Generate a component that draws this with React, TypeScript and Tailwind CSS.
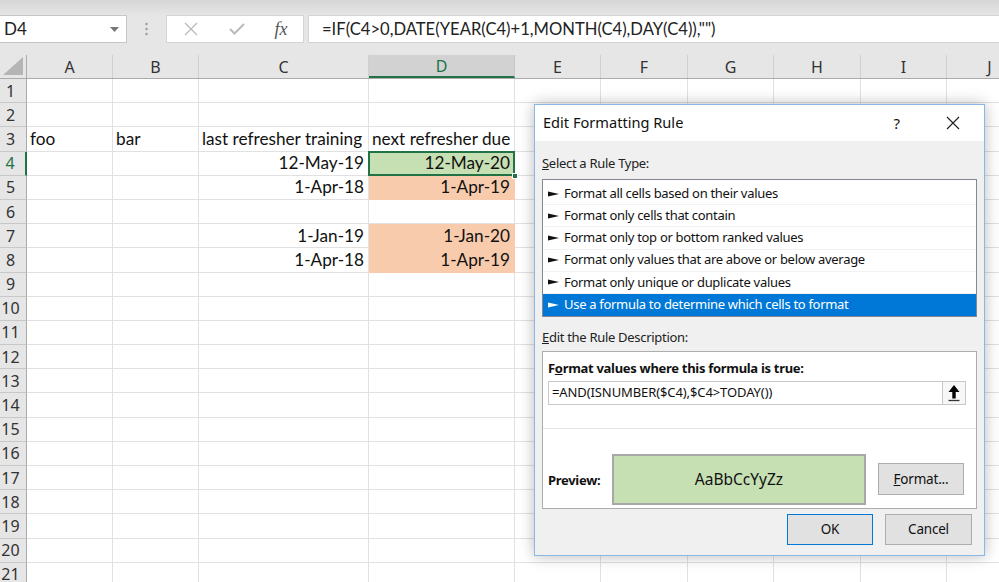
import React from 'react';

const CELL_FONT = "font-['Lato','Liberation_Sans',sans-serif]";
const UI_FONT = "font-['Noto_Sans','Open_Sans',sans-serif]";

const columns = [
  { key: 'A', w: 'w-[86px]' },
  { key: 'B', w: 'w-[86px]' },
  { key: 'C', w: 'w-[170px]' },
  { key: 'D', w: 'w-[146px]' },
  { key: 'E', w: 'w-[86px]' },
  { key: 'F', w: 'w-[87px]' },
  { key: 'G', w: 'w-[86px]' },
  { key: 'H', w: 'w-[87px]' },
  { key: 'I', w: 'w-[86px]' },
  { key: 'J', w: 'w-[86px]' },
];

type CellData = { text: string; align?: 'left' | 'right'; fill?: 'green' | 'salmon'; selected?: boolean };

const data: Record<number, Record<string, CellData>> = {
  3: {
    A: { text: 'foo' },
    B: { text: 'bar' },
    C: { text: 'last refresher training' },
    D: { text: 'next refresher due' },
  },
  4: {
    C: { text: '12-May-19', align: 'right' },
    D: { text: '12-May-20', align: 'right', fill: 'green', selected: true },
  },
  5: {
    C: { text: '1-Apr-18', align: 'right' },
    D: { text: '1-Apr-19', align: 'right', fill: 'salmon' },
  },
  7: {
    C: { text: '1-Jan-19', align: 'right' },
    D: { text: '1-Jan-20', align: 'right', fill: 'salmon' },
  },
  8: {
    C: { text: '1-Apr-18', align: 'right' },
    D: { text: '1-Apr-19', align: 'right', fill: 'salmon' },
  },
};

const rules = [
  'Format all cells based on their values',
  'Format only cells that contain',
  'Format only top or bottom ranked values',
  'Format only values that are above or below average',
  'Format only unique or duplicate values',
  'Use a formula to determine which cells to format',
];

const FormulaBar = () => (
  <div className="h-[55px] bg-[#e6e6e6] flex flex-col">
    <div className="h-[14px] bg-gradient-to-b from-[#d6d6d6] to-[#e4e4e4]" />
    <div className="flex items-center h-[28px] mt-[1px]">
      <div className="w-[127px] h-full bg-white border border-[#c6c6c6] border-l-0 flex items-center justify-between pl-[4px] pr-[7px]">
        <span className={`${CELL_FONT} text-[17px] text-[#222]`}>D4</span>
        <svg width="9" height="5" viewBox="0 0 9 5"><path d="M0 0h9L4.5 5z" fill="#777" /></svg>
      </div>
      <div className="w-[39px] flex justify-center">
        <svg width="3" height="14" viewBox="0 0 3 14">
          <circle cx="1.5" cy="2" r="1.2" fill="#999" />
          <circle cx="1.5" cy="7" r="1.2" fill="#999" />
          <circle cx="1.5" cy="12" r="1.2" fill="#999" />
        </svg>
      </div>
      <div className="w-[138px] h-full bg-white border border-[#d4d4d4] flex items-center">
        <div className="w-[48px] flex justify-center">
          <svg width="14" height="14" viewBox="0 0 14 14"><path d="M1 1l12 12M13 1L1 13" stroke="#bbb" strokeWidth="1.3" /></svg>
        </div>
        <div className="w-[44px] flex justify-center">
          <svg width="16" height="12" viewBox="0 0 16 12"><path d="M1 6l4.5 4.5L15 1" stroke="#bbb" strokeWidth="2" fill="none" /></svg>
        </div>
        <div className="w-[44px] flex justify-center">
          <span className="font-['Liberation_Serif',serif] italic text-[18px] text-[#555] leading-none">fx</span>
        </div>
      </div>
      <div className="flex-1 ml-[4px] h-full bg-white border border-[#d4d4d4] border-r-0 flex items-center pl-[13px]">
        <span className={`${CELL_FONT} text-[16.6px] text-[#222] whitespace-nowrap`}>=IF(C4&gt;0,DATE(YEAR(C4)+1,MONTH(C4),DAY(C4)),"")</span>
      </div>
    </div>
  </div>
);

const HeaderRow = () => (
  <div className="flex h-[24px] bg-[#e6e6e6] border-b border-[#ababab]">
    <div className="w-[27px] shrink-0 border-r border-[#ababab] relative flex items-end justify-end">
      <svg width="20" height="18" viewBox="0 0 20 18" className="mr-[3px] mb-[3px]"><path d="M20 0V18H0z" fill="#b5b5b5" /></svg>
    </div>
    {columns.map((c) =>
      c.key === 'D' ? (
        <div key={c.key} className={`${c.w} shrink-0 bg-[#d2d2d2] border-r border-[#c6c6c6] border-b-2 border-b-[#217346] flex items-center justify-center ${UI_FONT} text-[16px] text-[#217346]`}>
          {c.key}
        </div>
      ) : (
        <div key={c.key} className={`${c.w} shrink-0 border-r border-[#d0d0d0] flex items-center justify-center ${UI_FONT} text-[16px] text-[#333]`}>
          {c.key}
        </div>
      )
    )}
  </div>
);

const Cell = ({ w, cell }: { w: string; cell?: CellData }) => {
  const fill =
    cell?.fill === 'green'
      ? 'bg-[#c6e0b4] border-[#c6e0b4]'
      : cell?.fill === 'salmon'
      ? 'bg-[#f8cbad] border-[#f8cbad]'
      : 'border-[#e1e1e1]';
  return (
    <div className={`${w} shrink-0 border-r border-b ${fill} relative flex items-center ${cell?.align === 'right' ? 'justify-end pr-[4px]' : 'justify-start pl-[3px]'}`}>
      {cell && <span className={`${CELL_FONT} text-[17.2px] text-[#111] whitespace-nowrap relative z-10`}>{cell.text}</span>}
      {cell?.selected && (
        <>
          <div className="absolute -left-[1px] -top-[1px] -right-[1px] -bottom-[1px] border-2 border-[#217346]" />
          <div className="absolute -right-[4px] -bottom-[4px] w-[6px] h-[6px] bg-[#217346] border border-white z-20" />
        </>
      )}
    </div>
  );
};

const Sheet = () => (
  <div className="flex flex-col">
    <HeaderRow />
    {Array.from({ length: 21 }, (_, i) => i + 1).map((r) => (
      <div key={r} className="flex h-[24.2px]">
        <div className={`w-[27px] shrink-0 bg-[#e6e6e6] border-b border-[#c8c8c8] flex items-center justify-center pr-[5px] ${UI_FONT} text-[16px] ${r === 4 ? 'bg-[#d2d2d2] text-[#217346] border-r-2 border-r-[#217346]' : 'text-[#333] border-r border-r-[#ababab]'}`}>
          {r}
        </div>
        {columns.map((c) => (
          <Cell key={c.key} w={c.w} cell={data[r]?.[c.key]} />
        ))}
      </div>
    ))}
  </div>
);

const Button = ({ children, primary, className }: { children: React.ReactNode; primary?: boolean; className: string }) => (
  <div className={`${className} bg-[#e1e1e1] border ${primary ? 'border-[#0078d7]' : 'border-[#adadad]'} flex items-center justify-center text-[13.5px] tracking-[-0.2px] text-[#111]`}>
    {children}
  </div>
);

const Pointer = ({ color }: { color: string }) => (
  <svg width="11" height="6" viewBox="0 0 11 6" className="mr-[5px] shrink-0">
    <path d="M0 0.5L11 3L0 5.5z" fill={color} />
  </svg>
);

const Dialog = () => (
  <div className={`absolute left-[534px] top-[104px] w-[451px] h-[452px] bg-[#f0f0f0] border border-[#8ab8e6] shadow-[0_0_14px_rgba(0,0,0,0.28)] flex flex-col ${UI_FONT}`}>
    <div className="h-[36px] bg-white flex items-center pl-[8px]">
      <span className="text-[14.6px] text-[#111]">Edit Formatting Rule</span>
      <span className="ml-auto text-[15px] text-[#111] mr-[46px]">?</span>
      <svg width="14" height="14" viewBox="0 0 14 14" className="mr-[24px]"><path d="M1 1l12 12M13 1L1 13" stroke="#222" strokeWidth="1.2" /></svg>
    </div>
    <div className="px-[7px] flex flex-col text-[13px] tracking-[-0.3px]">
      <div className="h-[38px] flex items-end pb-[6px] text-[#222]">
        <span><span className="underline">S</span>elect a Rule Type:</span>
      </div>
      <div className="h-[138px] bg-white border border-[#828790] pt-[3px] flex flex-col">
        {rules.map((r, i) => (
          <div key={r} className={`h-[22.2px] shrink-0 flex items-center pl-[5px] ${i === 5 ? 'bg-[#0078d7] text-white' : 'text-[#111] border-b border-[#f2f2f2]'}`}>
            <Pointer color={i === 5 ? '#fff' : '#111'} />
            <span className="whitespace-nowrap">{r}</span>
          </div>
        ))}
      </div>
      <div className="h-[34px] flex items-end pb-[4px] text-[#222]">
        <span><span className="underline">E</span>dit the Rule Description:</span>
      </div>
      <div className="h-[158px] bg-white border border-[#adadad] flex flex-col">
        <div className="h-[77px] border-b border-[#e3e3e3] px-[5px] pt-[6px] flex flex-col">
          <span className="font-bold text-[#111] leading-[20px]">F<span className="underline">o</span>rmat values where this formula is true:</span>
          <div className="mt-[3px] h-[24px] w-[418px] border border-[#c8c8c8] flex items-center">
            <span className="flex-1 pl-[3px] text-[#111] whitespace-nowrap tracking-[-0.1px]">=AND(ISNUMBER($C4),$C4&gt;TODAY())</span>
            <div className="w-[23px] h-[22px] bg-[#f7f7f7] border-l border-[#c8c8c8] flex items-center justify-center">
              <svg width="14" height="18" viewBox="0 0 14 18">
                <path d="M7 1L1.5 8h3.8v6.5h3.4V8h3.8z" fill="#000" />
                <path d="M1.5 16.5h11" stroke="#333" strokeWidth="1.3" />
              </svg>
            </div>
          </div>
        </div>
        <div className="flex-1 flex items-end pb-[3px] pl-[5px]">
          <span className="font-bold text-[#111] w-[64px] mb-[15px]">Preview:</span>
          <div className="w-[254px] h-[51px] bg-[#c6e0b4] border-2 border-[#a8a8a8] flex items-center justify-center">
            <span className="text-[15.5px] tracking-normal text-[#111]">AaBbCcYyZz</span>
          </div>
          <Button className="ml-[12px] mb-[10px] w-[86px] h-[32px]"><span><span className="underline">F</span>ormat...</span></Button>
        </div>
      </div>
      <div className="flex justify-end mt-[5px] pr-[5px] gap-[12px]">
        <Button primary className="w-[86px] h-[31px]">OK</Button>
        <Button className="w-[87px] h-[31px]">Cancel</Button>
      </div>
    </div>
  </div>
);

export default function App() {
  return (
    <div className="w-[999px] h-[582px] overflow-hidden relative bg-white">
      <FormulaBar />
      <Sheet />
      <Dialog />
    </div>
  );
}
